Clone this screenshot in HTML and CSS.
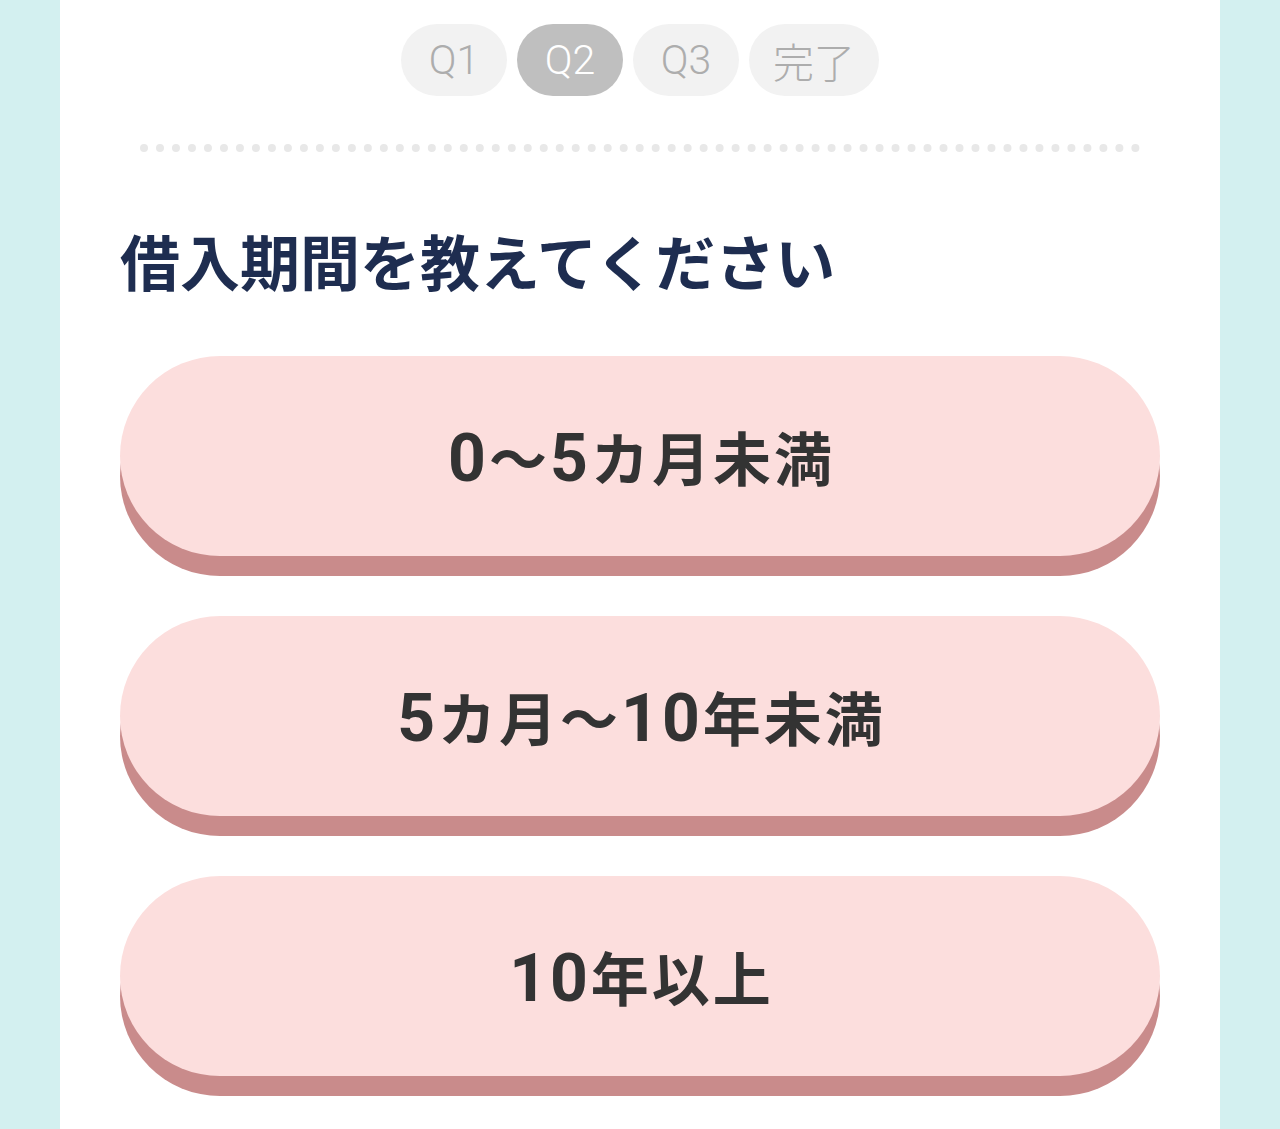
FILE: index.html
```html
<!DOCTYPE html>
<html lang="ja">
<head>
<meta charset="utf-8">
<link rel="stylesheet" href="styles.css">
</head>
<body>
<div class="page">
  <main class="panel">
    <nav class="steps">
      <span class="step">Q1</span>
      <span class="step active">Q2</span>
      <span class="step">Q3</span>
      <span class="step">完了</span>
    </nav>
    <div class="divider"></div>
    <h1 class="question">借入期間を教えてください</h1>
    <div class="options">
      <button class="option"><span class="num">0</span>〜<span class="num">5</span>カ月未満</button>
      <button class="option"><span class="num">5</span>カ月〜<span class="num">10</span>年未満</button>
      <button class="option"><span class="num">10</span>年以上</button>
    </div>
  </main>
</div>
</body>
</html>
```
FILE: styles.css
```css
html, body {
  margin: 0;
  padding: 0;
}
body {
  background: #d3f0f0;
  font-family: "Noto Sans CJK JP", "Noto Sans", sans-serif;
  height: 1129px;
  overflow: hidden;
}
.page {
  padding: 0 60px;
}
.panel {
  background: #ffffff;
  min-height: 1129px;
  padding: 24px 60px 0;
  box-sizing: border-box;
}
.steps {
  display: flex;
  justify-content: center;
  gap: 10px;
}
.step {
  display: flex;
  align-items: center;
  justify-content: center;
  height: 72px;
  min-width: 106px;
  padding: 0 24px;
  box-sizing: border-box;
  border-radius: 36px;
  background: #f2f2f2;
  color: #adadad;
  font-size: 41px;
  font-weight: 300;
  font-family: "Roboto", "Noto Sans CJK JP", sans-serif;
}
.step.active {
  background: #bfbfbf;
  color: #ffffff;
}
.divider {
  margin: 48px 20px 0;
  border-top: 8px dotted #e8e8e8;
}
.question {
  margin: 72px 0 0;
  font-size: 60px;
  line-height: 72px;
  font-weight: 700;
  color: #1e2d50;
  letter-spacing: 0;
}
.options {
  margin-top: 60px;
  display: flex;
  flex-direction: column;
  gap: 40px;
}
.option {
  display: block;
  width: 100%;
  height: 200px;
  margin-bottom: 20px;
  border: 0;
  border-radius: 100px;
  background: #fcdedd;
  box-shadow: 0 20px 0 #c98b8b;
  color: #333333;
  font-family: "Noto Sans CJK JP", "Noto Sans", sans-serif;
  font-size: 58px;
  font-weight: 700;
  letter-spacing: 3px;
  cursor: pointer;
  padding: 0 0 0 3px;
}
.num {
  font-family: "Roboto", "Noto Sans", sans-serif;
  font-size: 66px;
  font-weight: 700;
  line-height: 1;
}
```
